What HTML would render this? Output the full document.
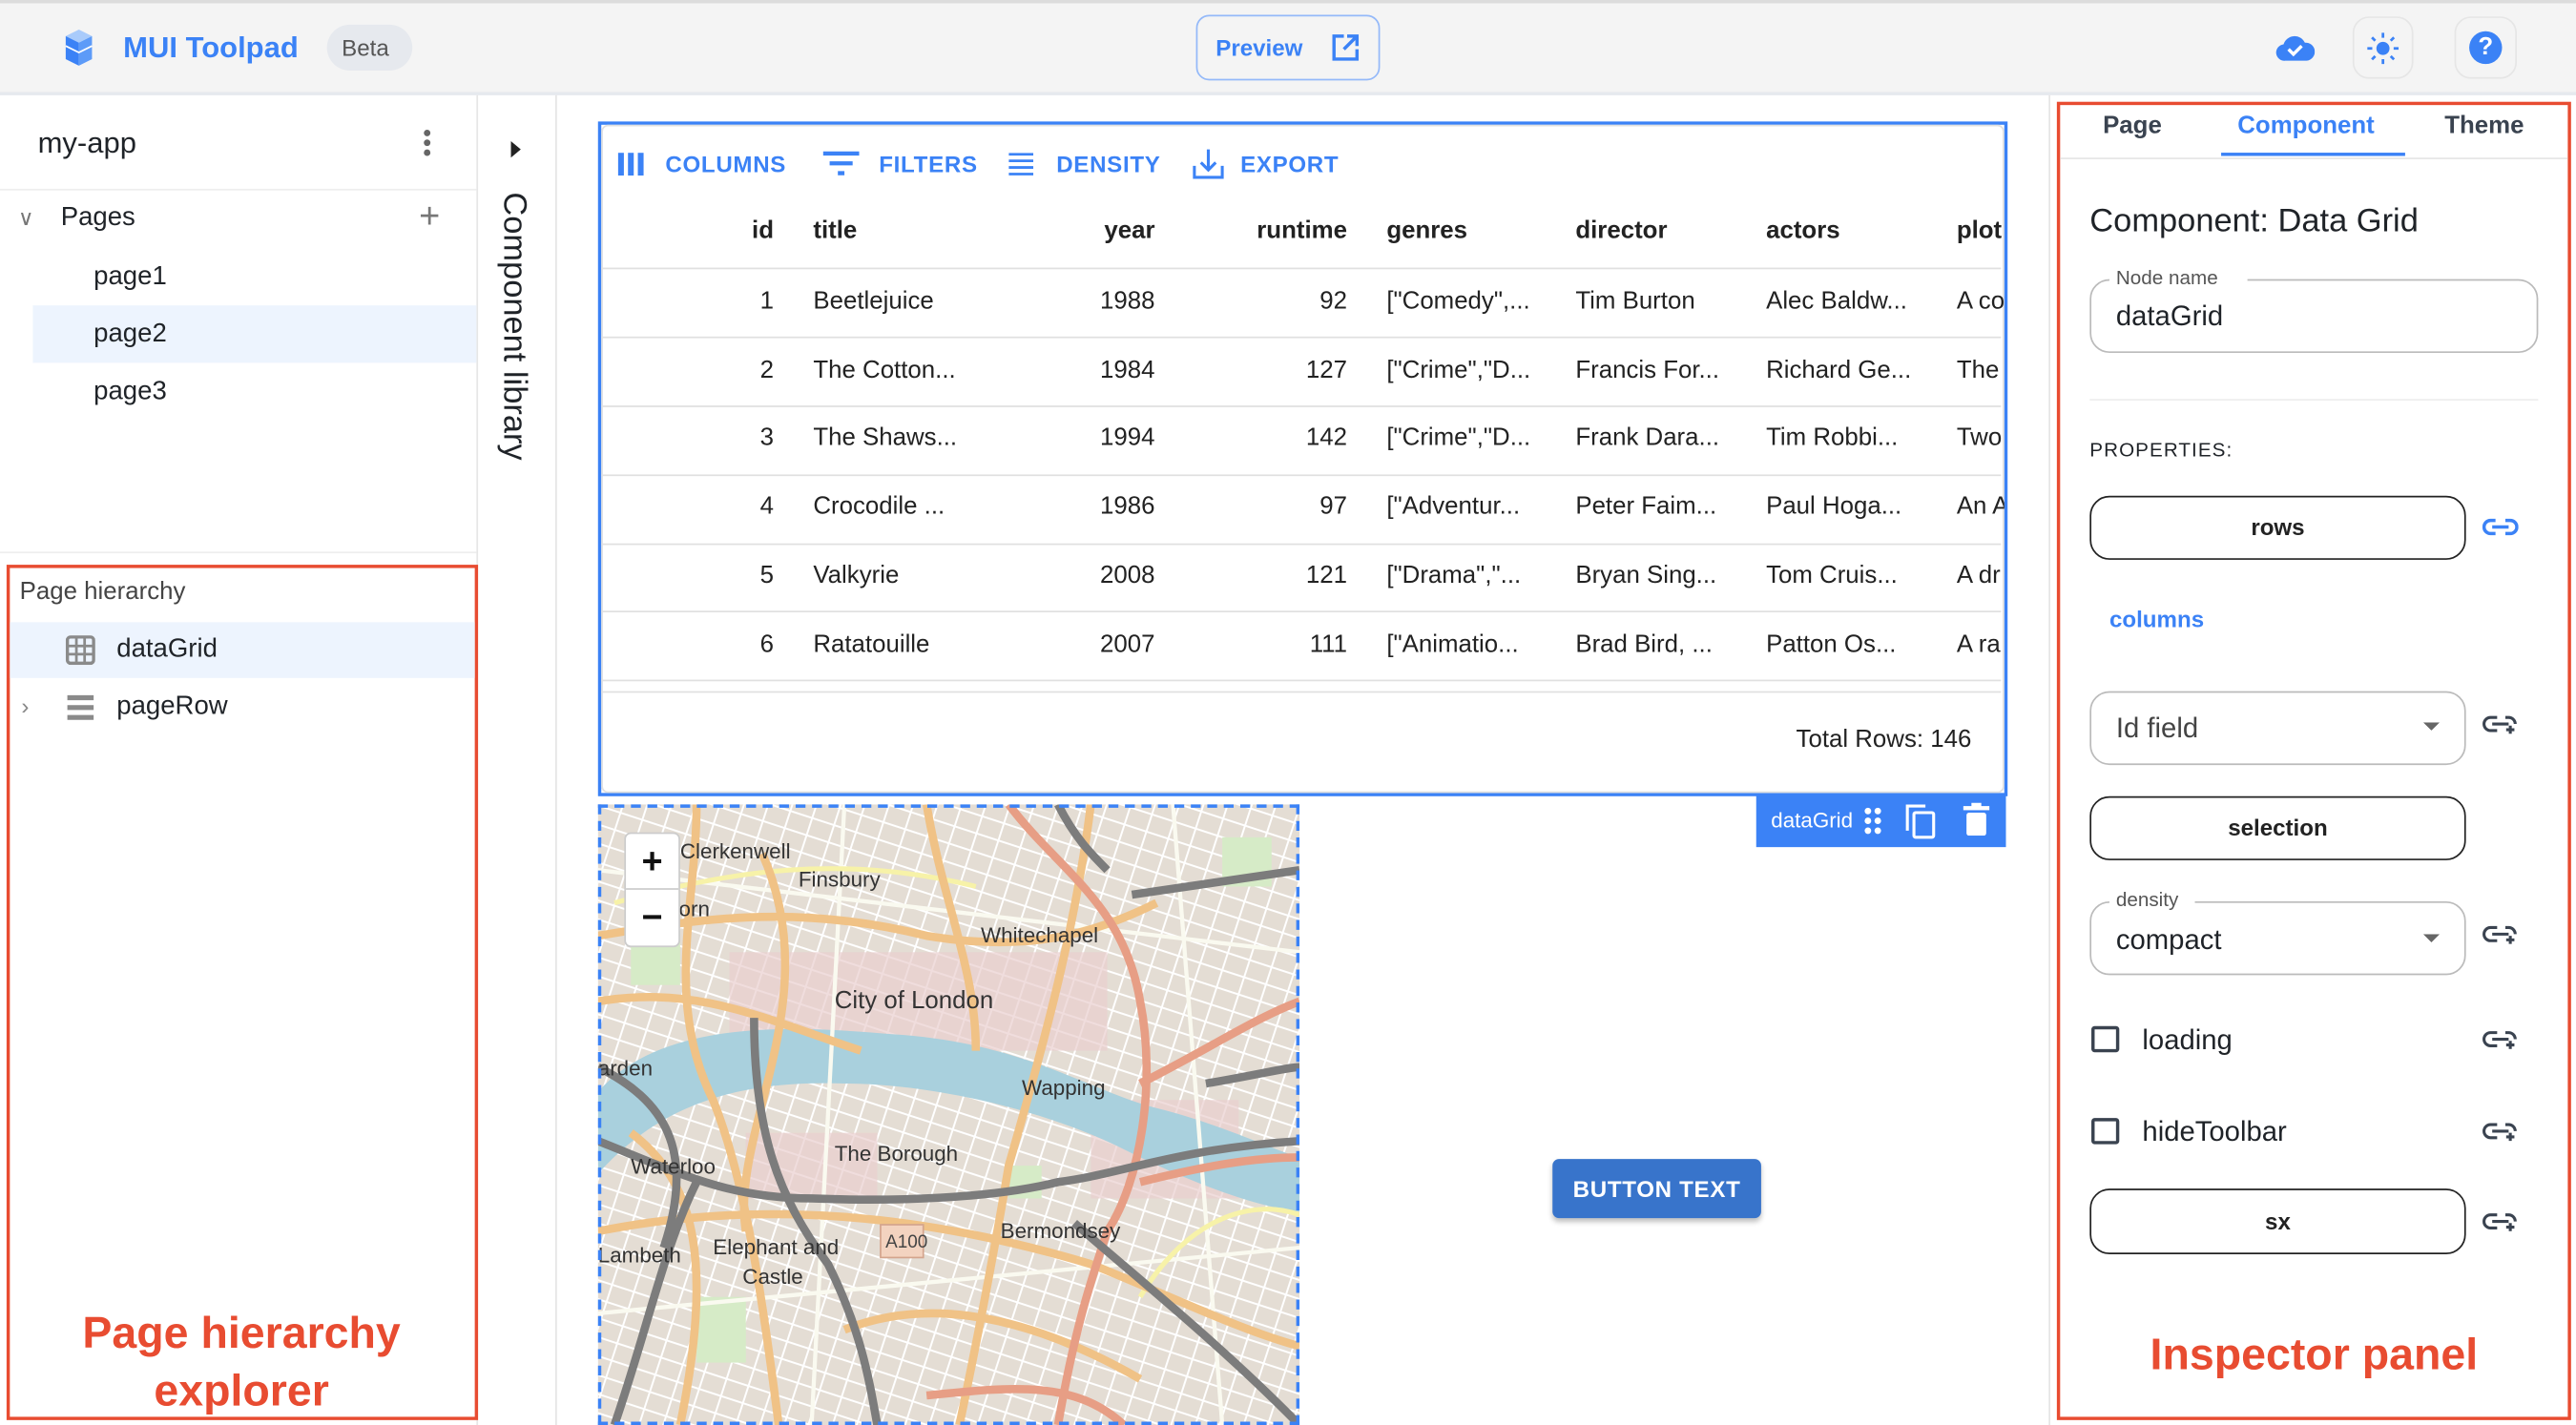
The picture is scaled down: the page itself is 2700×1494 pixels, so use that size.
<!DOCTYPE html>
<html><head><meta charset="utf-8"><style>
*{box-sizing:border-box;margin:0;padding:0}
html,body{width:2700px;height:1494px;overflow:hidden;background:#fff}
#s{position:absolute;left:0;top:0;width:1568px;height:868px;transform:scale(1.72194,1.72120);transform-origin:0 0;font-family:"Liberation Sans",sans-serif;color:#1f2328}
.a{position:absolute}
.t{position:absolute;white-space:nowrap;line-height:1}
.b{color:#3b82f6}
.gh{font-size:15px;font-weight:bold;color:#222}
.gc{font-size:15px;color:#222}
.hl{position:absolute;left:2px;width:852px;height:1px;background:#e0e0e0}
.ob{position:absolute;border:1px solid #bbb;border-radius:12px}
.bb{position:absolute;border:1.5px solid #222;border-radius:12px;text-align:center;font-weight:bold;font-size:14px;color:#222}
.lk{position:absolute;width:22px;height:12px}
</style></head><body><div id="s">
<!-- top bar -->
<div class="a" style="left:0;top:0;width:1568px;height:58px;background:#f4f4f4;border-top:2px solid #dcdcdc;border-bottom:2px solid #e6e9ee"></div>
<svg class="a" style="left:36px;top:16px" width="24" height="26" viewBox="0 0 24 26"><path d="M4 6 L12 2 L20 6 L12 10Z" fill="#a9cbfb"/><path d="M4 6 L12 10 L12 24 L4 20Z" fill="#3b82f6"/><path d="M12 10 L20 6 L20 20 L12 24Z" fill="#5d9bf8"/><path d="M4 12 L12 16 L20 12" stroke="#fff" stroke-width="1" fill="none"/></svg>
<div class="t b" style="left:75px;top:20px;font-size:18px;font-weight:bold">MUI Toolpad</div>
<div class="a" style="left:199px;top:15px;width:52px;height:28px;border-radius:14px;background:#e6e9ee"></div>
<div class="t" style="left:208px;top:22px;font-size:14px;color:#555">Beta</div>
<div class="a" style="left:728px;top:9px;width:112px;height:40px;border:1.5px solid #94b9f9;border-radius:8px"></div>
<div class="t b" style="left:740px;top:22px;font-size:14px;font-weight:bold">Preview</div>
<svg class="a" style="left:810px;top:20px" width="18" height="18" viewBox="0 0 18 18" fill="none" stroke="#3b82f6" stroke-width="2"><path d="M8 2H2v14h14v-6M10 2h6v6M16 2L8 10"/></svg>
<svg class="a" style="left:1385px;top:19px" width="24" height="20" viewBox="0 0 24 20"><path d="M6 18a5 5 0 0 1-1-10 7 7 0 0 1 13-1 5 5 0 0 1 1 11z" fill="#3b82f6"/><path d="M8 11l3 3 5-5" stroke="#fff" stroke-width="2" fill="none"/></svg>
<div class="a" style="left:1432px;top:10px;width:37px;height:38px;border:1px solid #e6e6e6;border-radius:10px"></div>
<svg class="a" style="left:1440px;top:19px" width="21" height="21" viewBox="0 0 21 21"><circle cx="10.5" cy="10.5" r="4" fill="#3b82f6"/><g stroke="#3b82f6" stroke-width="1.6"><path d="M10.5 1v3M10.5 17v3M1 10.5h3M17 10.5h3M3.8 3.8l2 2M15.2 15.2l2 2M3.8 17.2l2-2M15.2 5.8l2-2"/></g></svg>
<div class="a" style="left:1494px;top:10px;width:38px;height:38px;border:1px solid #e6e6e6;border-radius:10px"></div>
<div class="a" style="left:1503px;top:19px;width:20px;height:20px;border-radius:50%;background:#3b82f6;color:#fff;font-weight:bold;font-size:15px;text-align:center;line-height:20px">?</div>

<!-- left panel -->
<div class="a" style="left:290px;top:58px;width:1px;height:810px;background:#e6e6e6"></div>
<div class="a" style="left:338px;top:58px;width:1px;height:810px;background:#e6e6e6"></div>
<div class="t" style="left:23px;top:78px;font-size:18px">my-app</div>
<div class="a" style="left:258px;top:79px;width:4px;height:4px;border-radius:2px;background:#666;box-shadow:0 6px 0 #666,0 12px 0 #666"></div>
<div class="a" style="left:0;top:115px;width:290px;height:1px;background:#eee"></div>
<div class="t" style="left:11px;top:126px;font-size:13px;color:#777">&#8744;</div>
<div class="t" style="left:37px;top:125px;font-size:16px">Pages</div>
<div class="t" style="left:255px;top:121px;font-size:22px;color:#777">+</div>
<div class="t" style="left:57px;top:161px;font-size:16px">page1</div>
<div class="a" style="left:20px;top:186px;width:270px;height:35px;background:#edf4fe"></div>
<div class="t" style="left:57px;top:196px;font-size:16px">page2</div>
<div class="t" style="left:57px;top:231px;font-size:16px">page3</div>
<div class="a" style="left:0;top:336px;width:290px;height:1px;background:#eee"></div>
<div class="a" style="left:4px;top:344px;width:287px;height:521px;border:2px solid #e84c31"></div>
<div class="t" style="left:12px;top:353px;font-size:15px;color:#444">Page hierarchy</div>
<div class="a" style="left:6px;top:379px;width:283px;height:34px;background:#edf4fe"></div>
<svg class="a" style="left:40px;top:387px" width="18" height="18" viewBox="0 0 18 18"><rect x="1" y="1" width="16" height="16" rx="2" fill="none" stroke="#8a8a8a" stroke-width="2"/><path d="M1 6.5h16M1 11.5h16M6.5 1v16M11.5 1v16" stroke="#8a8a8a" stroke-width="1.6"/></svg>
<div class="t" style="left:71px;top:388px;font-size:16px">dataGrid</div>
<div class="t" style="left:13px;top:423px;font-size:14px;color:#888">&#8250;</div>
<svg class="a" style="left:40px;top:423px" width="18" height="16" viewBox="0 0 18 16"><path d="M1 2h16M1 8h16M1 14h16" stroke="#8a8a8a" stroke-width="3"/></svg>
<div class="t" style="left:71px;top:423px;font-size:16px">pageRow</div>
<div class="t" style="left:0;top:795px;width:294px;text-align:center;color:#e84c31;font-size:27px;font-weight:bold;line-height:35px">Page hierarchy<br>explorer</div>

<!-- library strip -->
<svg class="a" style="left:310px;top:86px" width="8" height="10"><path d="M1 0L7 5L1 10Z" fill="#222"/></svg>
<div class="t" style="left:301px;top:117px;font-size:20px;transform-origin:0 0;transform:translateX(22px) rotate(90deg)">Component library</div>

<!-- data grid -->
<div class="a" style="left:364px;top:74px;width:858px;height:411px;border:2px solid #3b82f6"></div>
<div class="a" style="left:366px;top:76px;width:854px;height:407px;border:1px solid #e0e0e0;border-radius:4px"></div>
<svg class="a" style="left:376px;top:93px" width="18" height="14"><path d="M2 0v14M8 0v14M14 0v14" stroke="#3b82f6" stroke-width="3.5"/></svg>
<div class="t b" style="left:405px;top:93px;font-size:14px;font-weight:bold;letter-spacing:.4px">COLUMNS</div>
<svg class="a" style="left:501px;top:92px" width="22" height="16"><path d="M0 1.5h22M4 7.5h14M9 13.5h4" stroke="#3b82f6" stroke-width="2.5"/></svg>
<div class="t b" style="left:535px;top:93px;font-size:14px;font-weight:bold;letter-spacing:.4px">FILTERS</div>
<svg class="a" style="left:614px;top:93px" width="15" height="14"><path d="M0 1h15M0 5h15M0 9h15M0 13h15" stroke="#3b82f6" stroke-width="1.6"/></svg>
<div class="t b" style="left:643px;top:93px;font-size:14px;font-weight:bold;letter-spacing:.4px">DENSITY</div>
<svg class="a" style="left:726px;top:90px" width="19" height="19" fill="none" stroke="#3b82f6" stroke-width="1.8"><path d="M9.5 1v12M5 9l4.5 4.5L14 9M1 11v7h17v-7"/></svg>
<div class="t b" style="left:755px;top:93px;font-size:14px;font-weight:bold;letter-spacing:.4px">EXPORT</div>
<div class="t gh" style="left:451px;top:133px;width:20px;text-align:right">id</div>
<div class="t gh" style="left:495px;top:133px">title</div>
<div class="t gh" style="left:603px;top:133px;width:100px;text-align:right">year</div>
<div class="t gh" style="left:720px;top:133px;width:100px;text-align:right">runtime</div>
<div class="t gh" style="left:844px;top:133px">genres</div>
<div class="t gh" style="left:959px;top:133px">director</div>
<div class="t gh" style="left:1075px;top:133px">actors</div>
<div class="t gh" style="left:1191px;top:133px">plot</div>
<div class="hl" style="left:366px;top:163px"></div>
<div class="hl" style="left:366px;top:205px"></div>
<div class="hl" style="left:366px;top:247px"></div>
<div class="hl" style="left:366px;top:289px"></div>
<div class="hl" style="left:366px;top:331px"></div>
<div class="hl" style="left:366px;top:372px"></div>
<div class="hl" style="left:366px;top:414px"></div>
<div class="hl" style="left:366px;top:421px"></div>
<div style="position:absolute;left:0;top:0;width:1220px;height:480px;overflow:hidden">
<div style="position:absolute;left:0;top:176px">
<div class="t gc" style="left:451px;top:0;width:20px;text-align:right">1</div><div class="t gc" style="left:495px;top:0">Beetlejuice</div><div class="t gc" style="left:603px;top:0;width:100px;text-align:right">1988</div><div class="t gc" style="left:720px;top:0;width:100px;text-align:right">92</div><div class="t gc" style="left:844px;top:0">["Comedy",...</div><div class="t gc" style="left:959px;top:0">Tim Burton</div><div class="t gc" style="left:1075px;top:0">Alec Baldw...</div><div class="t gc" style="left:1191px;top:0">A cou</div>
</div>
<div style="position:absolute;left:0;top:218px">
<div class="t gc" style="left:451px;top:0;width:20px;text-align:right">2</div><div class="t gc" style="left:495px;top:0">The Cotton...</div><div class="t gc" style="left:603px;top:0;width:100px;text-align:right">1984</div><div class="t gc" style="left:720px;top:0;width:100px;text-align:right">127</div><div class="t gc" style="left:844px;top:0">["Crime","D...</div><div class="t gc" style="left:959px;top:0">Francis For...</div><div class="t gc" style="left:1075px;top:0">Richard Ge...</div><div class="t gc" style="left:1191px;top:0">The</div>
</div>
<div style="position:absolute;left:0;top:259px">
<div class="t gc" style="left:451px;top:0;width:20px;text-align:right">3</div><div class="t gc" style="left:495px;top:0">The Shaws...</div><div class="t gc" style="left:603px;top:0;width:100px;text-align:right">1994</div><div class="t gc" style="left:720px;top:0;width:100px;text-align:right">142</div><div class="t gc" style="left:844px;top:0">["Crime","D...</div><div class="t gc" style="left:959px;top:0">Frank Dara...</div><div class="t gc" style="left:1075px;top:0">Tim Robbi...</div><div class="t gc" style="left:1191px;top:0">Two</div>
</div>
<div style="position:absolute;left:0;top:301px">
<div class="t gc" style="left:451px;top:0;width:20px;text-align:right">4</div><div class="t gc" style="left:495px;top:0">Crocodile ...</div><div class="t gc" style="left:603px;top:0;width:100px;text-align:right">1986</div><div class="t gc" style="left:720px;top:0;width:100px;text-align:right">97</div><div class="t gc" style="left:844px;top:0">["Adventur...</div><div class="t gc" style="left:959px;top:0">Peter Faim...</div><div class="t gc" style="left:1075px;top:0">Paul Hoga...</div><div class="t gc" style="left:1191px;top:0">An A</div>
</div>
<div style="position:absolute;left:0;top:343px">
<div class="t gc" style="left:451px;top:0;width:20px;text-align:right">5</div><div class="t gc" style="left:495px;top:0">Valkyrie</div><div class="t gc" style="left:603px;top:0;width:100px;text-align:right">2008</div><div class="t gc" style="left:720px;top:0;width:100px;text-align:right">121</div><div class="t gc" style="left:844px;top:0">["Drama","...</div><div class="t gc" style="left:959px;top:0">Bryan Sing...</div><div class="t gc" style="left:1075px;top:0">Tom Cruis...</div><div class="t gc" style="left:1191px;top:0">A dr</div>
</div>
<div style="position:absolute;left:0;top:385px">
<div class="t gc" style="left:451px;top:0;width:20px;text-align:right">6</div><div class="t gc" style="left:495px;top:0">Ratatouille</div><div class="t gc" style="left:603px;top:0;width:100px;text-align:right">2007</div><div class="t gc" style="left:720px;top:0;width:100px;text-align:right">111</div><div class="t gc" style="left:844px;top:0">["Animatio...</div><div class="t gc" style="left:959px;top:0">Brad Bird, ...</div><div class="t gc" style="left:1075px;top:0">Patton Os...</div><div class="t gc" style="left:1191px;top:0">A ra</div>
</div>
</div>
<div class="t gc" style="left:1000px;top:443px;width:200px;text-align:right">Total Rows: 146</div>
<div class="a" style="left:1069px;top:484px;width:152px;height:32px;background:#3b82f6"></div>
<div class="t" style="left:1078px;top:493px;font-size:13px;color:#fff">dataGrid</div>
<svg class="a" style="left:1134px;top:491px" width="12" height="18" fill="#fff"><circle cx="3" cy="3" r="2"/><circle cx="9" cy="3" r="2"/><circle cx="3" cy="9" r="2"/><circle cx="9" cy="9" r="2"/><circle cx="3" cy="15" r="2"/><circle cx="9" cy="15" r="2"/></svg>
<svg class="a" style="left:1159px;top:489px" width="20" height="22" fill="none" stroke="#fff" stroke-width="1.8"><path d="M2 17V2h11"/><rect x="6" y="6" width="12" height="15" rx="1"/></svg>
<svg class="a" style="left:1195px;top:489px" width="16" height="20" fill="#fff"><rect x="0" y="2" width="16" height="2.5"/><rect x="5" y="0" width="6" height="3"/><rect x="2" y="6" width="12" height="14" rx="1.5"/></svg>

<!-- map -->
<div class="a" style="left:364px;top:490px;width:427px;height:378px;overflow:hidden;background:#efe9e1">
<svg width="427" height="378" viewBox="0 0 427 378">
<defs><pattern id="st" width="14" height="11" patternUnits="userSpaceOnUse" patternTransform="rotate(18)"><rect width="14" height="11" fill="#e4ddd4"/><path d="M0 0.5h14M0.5 0v11" stroke="#fff" stroke-width="1.3"/></pattern></defs>
<rect width="427" height="378" fill="url(#st)"/>
<g fill="#e9cfce" opacity=".7"><rect x="80" y="90" width="230" height="60"/><rect x="300" y="180" width="90" height="60"/><rect x="90" y="200" width="80" height="40"/></g>
<g fill="#d6ebc7"><rect x="20" y="80" width="30" height="30"/><rect x="250" y="220" width="20" height="20"/><rect x="380" y="20" width="30" height="30"/><rect x="60" y="300" width="30" height="40"/></g>
<path d="M0 175 C40 130 120 135 180 140 C260 145 300 175 340 185 C380 195 410 210 427 215 L427 248 C400 245 360 230 320 210 C270 185 200 170 150 170 C90 168 40 180 0 225Z" fill="#a9d0dd"/>
<g fill="none" stroke="#fafaf0" stroke-width="2.5"><path d="M0 40 L427 90"/><path d="M150 0 L130 378"/><path d="M0 310 L427 270"/><path d="M350 0 L380 378"/></g>
<g fill="none" stroke="#f7f2a8" stroke-width="3"><path d="M10 60 C80 40 150 30 230 50"/><path d="M330 300 C360 250 400 240 427 250"/></g>
<g fill="none" stroke="#f0c286" stroke-width="5"><path d="M0 80 C60 70 120 60 200 80 C260 90 300 80 340 60"/><path d="M60 0 C60 60 40 120 70 180 C90 230 100 300 110 378"/><path d="M100 30 C140 120 80 200 90 260"/><path d="M200 0 C210 60 230 100 230 150"/><path d="M300 0 C290 80 270 150 250 220 C240 280 230 330 220 378"/><path d="M0 260 C100 240 200 250 300 280 C350 300 390 320 427 330"/><path d="M150 320 C200 300 260 310 330 350"/><path d="M0 120 C60 110 100 130 160 150"/><path d="M20 200 C60 230 70 280 50 378"/></g>
<g fill="none" stroke="#e79e85" stroke-width="5"><path d="M250 0 C280 40 320 60 330 120 C340 170 330 230 310 260 C300 290 290 320 280 378"/><path d="M330 170 C370 150 400 130 427 120"/><path d="M330 230 C370 220 400 215 427 215"/><path d="M200 360 C250 355 290 350 320 378"/></g>
<g fill="none" stroke="#7c7c7c" stroke-width="5"><path d="M0 160 C40 180 60 210 40 270"/><path d="M0 205 C50 225 80 240 130 240 C180 242 240 240 280 230 C320 225 350 210 427 205"/><path d="M95 130 C95 200 110 240 140 280 C160 320 165 350 170 378"/><path d="M290 255 C330 290 380 330 427 378"/><path d="M60 230 C40 270 30 320 10 378"/><path d="M325 55 L427 40"/><path d="M280 0 C290 20 300 30 310 40"/><path d="M370 170 C400 165 420 160 427 160"/></g>
<g font-family="Liberation Sans,sans-serif" font-size="13" fill="#333"><text x="50" y="33">Clerkenwell</text><text x="122" y="50">Finsbury</text><text x="233" y="84">Whitechapel</text><text x="144" y="124" font-size="15">City of London</text><text x="0" y="165">arden</text><text x="258" y="177">Wapping</text><text x="144" y="217">The Borough</text><text x="20" y="225">Waterloo</text><text x="245" y="264">Bermondsey</text><text x="0" y="279">Lambeth</text><text x="70" y="274">Elephant and</text><text x="88" y="292">Castle</text><text x="42" y="68">born</text></g>
<rect x="172" y="256" width="26" height="20" fill="#f3d3c0" stroke="#d4a58e"/><text x="175" y="270" font-size="11" font-family="Liberation Sans,sans-serif" fill="#444">A100</text>
</svg>
<div class="a" style="left:16px;top:17px;width:34px;height:70px;background:#fff;border-radius:4px;border:1px solid #ccc;font-size:22px;font-weight:bold;text-align:center;line-height:33px;color:#111">+<div style="border-top:1px solid #ccc">−</div></div>
</div>
<div class="a" style="left:364px;top:490px;width:427px;height:378px;border:2px dashed #3b82f6"></div>

<div class="a" style="left:945px;top:706px;width:127px;height:36px;background:#3874cb;border-radius:4px;box-shadow:0 2px 3px rgba(0,0,0,.25);color:#fff;font-size:14px;font-weight:bold;text-align:center;line-height:36px;letter-spacing:.4px">BUTTON TEXT</div>

<!-- right panel -->
<div class="a" style="left:1247px;top:58px;width:1px;height:810px;background:#e6e6e6"></div>
<div class="a" style="left:1252px;top:62px;width:313px;height:803px;border:2px solid #e84c31"></div>
<div class="a" style="left:1254px;top:96px;width:309px;height:1px;background:#e6e6e6"></div>
<div class="t" style="left:1280px;top:69px;font-size:15px;font-weight:bold;color:#3a4350">Page</div>
<div class="t b" style="left:1362px;top:69px;font-size:15px;font-weight:bold">Component</div>
<div class="a" style="left:1352px;top:93px;width:112px;height:2px;background:#3b82f6"></div>
<div class="t" style="left:1488px;top:69px;font-size:15px;font-weight:bold;color:#3a4350">Theme</div>
<div class="t" style="left:1272px;top:125px;font-size:20px">Component: Data Grid</div>
<div class="ob" style="left:1272px;top:170px;width:273px;height:45px"></div>
<div class="a" style="left:1284px;top:163px;width:84px;height:12px;background:#fff"></div>
<div class="t" style="left:1288px;top:163px;font-size:12px;color:#555">Node name</div>
<div class="t" style="left:1288px;top:184px;font-size:17px">dataGrid</div>
<div class="a" style="left:1272px;top:243px;width:273px;height:1px;background:#eee"></div>
<div class="t" style="left:1272px;top:268px;font-size:12px;letter-spacing:.6px">PROPERTIES:</div>
<div class="bb" style="left:1272px;top:302px;width:229px;height:39px;line-height:37px">rows</div>
<svg class="lk" style="left:1511px;top:315px" viewBox="0 0 22 12" fill="none" stroke="#3b82f6" stroke-width="2"><path d="M8 2H5a4 4 0 0 0 0 8h3M14 2h3a4 4 0 0 1 0 8h-3M6 6h10"/></svg>
<div class="t b" style="left:1284px;top:370px;font-size:14px;font-weight:bold">columns</div>
<div class="ob" style="left:1272px;top:421px;width:229px;height:45px"></div>
<div class="t" style="left:1288px;top:435px;font-size:17px;color:#444">Id field</div>
<svg class="a" style="left:1475px;top:440px" width="10" height="5"><path d="M0 0h10L5 5Z" fill="#666"/></svg>
<div class="bb" style="left:1272px;top:485px;width:229px;height:39px;line-height:37px">selection</div>
<div class="ob" style="left:1272px;top:549px;width:229px;height:45px"></div>
<div class="a" style="left:1284px;top:542px;width:52px;height:12px;background:#fff"></div>
<div class="t" style="left:1288px;top:542px;font-size:12px;color:#555">density</div>
<div class="t" style="left:1288px;top:564px;font-size:17px">compact</div>
<svg class="a" style="left:1475px;top:569px" width="10" height="5"><path d="M0 0h10L5 5Z" fill="#666"/></svg>
<div class="a" style="left:1273px;top:625px;width:17px;height:16px;border:2px solid #3a4350;border-radius:2px"></div>
<div class="t" style="left:1304px;top:625px;font-size:17px">loading</div>
<div class="a" style="left:1273px;top:681px;width:17px;height:16px;border:2px solid #3a4350;border-radius:2px"></div>
<div class="t" style="left:1304px;top:681px;font-size:17px">hideToolbar</div>
<div class="bb" style="left:1272px;top:724px;width:229px;height:40px;line-height:38px">sx</div>
<svg class="lk" style="left:1511px;top:435px" viewBox="0 0 22 12" fill="none" stroke="#3a4350" stroke-width="1.8"><path d="M9 2H5a4 4 0 0 0 0 8h4M14 2h2a4 4 0 0 1 4 4M6 6h10M17 7v5M14.5 9.5h5"/></svg>
<svg class="lk" style="left:1511px;top:563px" viewBox="0 0 22 12" fill="none" stroke="#3a4350" stroke-width="1.8"><path d="M9 2H5a4 4 0 0 0 0 8h4M14 2h2a4 4 0 0 1 4 4M6 6h10M17 7v5M14.5 9.5h5"/></svg>
<svg class="lk" style="left:1511px;top:627px" viewBox="0 0 22 12" fill="none" stroke="#3a4350" stroke-width="1.8"><path d="M9 2H5a4 4 0 0 0 0 8h4M14 2h2a4 4 0 0 1 4 4M6 6h10M17 7v5M14.5 9.5h5"/></svg>
<svg class="lk" style="left:1511px;top:683px" viewBox="0 0 22 12" fill="none" stroke="#3a4350" stroke-width="1.8"><path d="M9 2H5a4 4 0 0 0 0 8h4M14 2h2a4 4 0 0 1 4 4M6 6h10M17 7v5M14.5 9.5h5"/></svg>
<svg class="lk" style="left:1511px;top:738px" viewBox="0 0 22 12" fill="none" stroke="#3a4350" stroke-width="1.8"><path d="M9 2H5a4 4 0 0 0 0 8h4M14 2h2a4 4 0 0 1 4 4M6 6h10M17 7v5M14.5 9.5h5"/></svg>
<div class="t" style="left:1254px;top:812px;width:309px;text-align:center;color:#e84c31;font-size:27px;font-weight:bold">Inspector panel</div>
</div></body></html>
